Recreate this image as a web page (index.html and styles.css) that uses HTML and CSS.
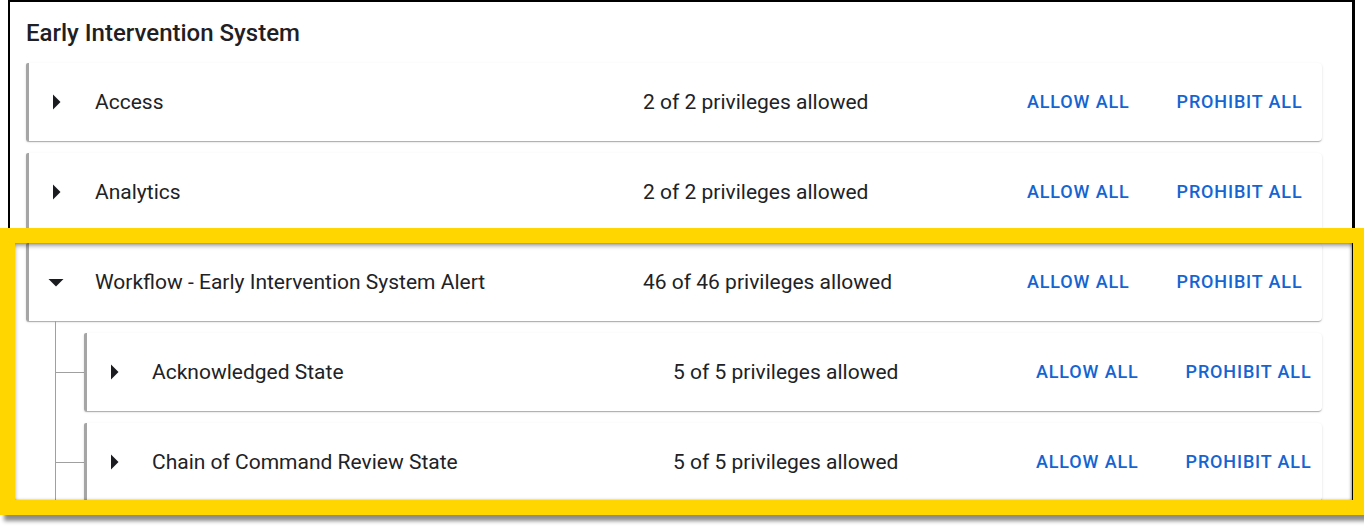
FILE: index.html
```html
<!DOCTYPE html>
<html lang="en">
<head>
<meta charset="utf-8">
<title>Early Intervention System</title>
<link rel="stylesheet" href="styles.css">
</head>
<body>
<div class="frame">
  <h2 class="title">Early Intervention System</h2>
  <div class="list">
    <div class="card top">
      <span class="caret"><svg viewBox="0 0 24 24" width="36" height="36"><path d="M10 17l5-5-5-5v10z"/></svg></span>
      <span class="label">Access</span>
      <span class="count">2 of 2 privileges allowed</span>
      <div class="actions"><button class="btn">Allow all</button><button class="btn">Prohibit all</button></div>
    </div>
    <div class="card top">
      <span class="caret"><svg viewBox="0 0 24 24" width="36" height="36"><path d="M10 17l5-5-5-5v10z"/></svg></span>
      <span class="label">Analytics</span>
      <span class="count">2 of 2 privileges allowed</span>
      <div class="actions"><button class="btn">Allow all</button><button class="btn">Prohibit all</button></div>
    </div>
    <div class="group">
      <div class="card top">
        <span class="caret"><svg viewBox="0 0 24 24" width="36" height="36"><path d="M7 10l5 5 5-5z"/></svg></span>
        <span class="label">Workflow - Early Intervention System Alert</span>
        <span class="count">46 of 46 privileges allowed</span>
        <div class="actions"><button class="btn">Allow all</button><button class="btn">Prohibit all</button></div>
      </div>
      <div class="sublist">
        <div class="subitem">
          <span class="connector"></span>
          <div class="card sub">
            <span class="caret"><svg viewBox="0 0 24 24" width="36" height="36"><path d="M10 17l5-5-5-5v10z"/></svg></span>
            <span class="label">Acknowledged State</span>
            <span class="count">5 of 5 privileges allowed</span>
            <div class="actions"><button class="btn">Allow all</button><button class="btn">Prohibit all</button></div>
          </div>
        </div>
        <div class="subitem">
          <span class="connector"></span>
          <div class="card sub">
            <span class="caret"><svg viewBox="0 0 24 24" width="36" height="36"><path d="M10 17l5-5-5-5v10z"/></svg></span>
            <span class="label">Chain of Command Review State</span>
            <span class="count">5 of 5 privileges allowed</span>
            <div class="actions"><button class="btn">Allow all</button><button class="btn">Prohibit all</button></div>
          </div>
        </div>
      </div>
    </div>
  </div>
</div>
<div class="highlight"></div>
</body>
</html>
```
FILE: styles.css
```css
html, body {
  margin: 0;
  padding: 0;
  height: 100%;
  overflow: hidden;
  background: #fff;
}
body {
  position: relative;
  font-family: Roboto, "Liberation Sans", sans-serif;
  color: #212226;
}
.frame {
  margin-left: 8px;
  width: 1347px;
  height: 506px;
  border: 2px solid #000;
  border-right-width: 3px;
  padding: 17px 30px 0 16px;
  box-sizing: border-box;
}
.title {
  margin: 0 0 16px 0;
  font-size: 24px;
  line-height: 28px;
  font-weight: 500;
  color: #1f2024;
}
.list {
  display: flex;
  flex-direction: column;
  gap: 12px;
}
.card {
  display: grid;
  align-items: center;
  height: 78px;
  box-sizing: border-box;
  background: #fff;
  border-left: 3px solid #a5a5a5;
  border-radius: 2px 4px 4px 2px;
  box-shadow: 0 2px 1px -1px rgba(0,0,0,.18), 0 1px 1px 0 rgba(0,0,0,.12), 0 1px 3px 0 rgba(0,0,0,.10);
}
.card.top {
  grid-template-columns: 66px 548px 376px auto;
}
.card.sub {
  flex: 1;
  grid-template-columns: 65px 521px 355px auto;
}
.caret {
  display: flex;
  margin-left: 9px;
  width: 36px;
  height: 36px;
}
.caret svg {
  fill: #1b1c1f;
}
.label, .count {
  font-size: 21px;
  line-height: 24px;
  white-space: nowrap;
}
.actions {
  display: flex;
  gap: 31px;
  white-space: nowrap;
}
.btn {
  font-family: Roboto, "Liberation Sans", sans-serif;
  font-size: 18px;
  font-weight: 500;
  letter-spacing: 0.85px;
  text-transform: uppercase;
  color: #1464d2;
  background: none;
  border: 0;
  padding: 6px 8px;
  line-height: 24px;
  cursor: pointer;
}
.group {
  display: flex;
  flex-direction: column;
}
.sublist {
  margin-left: 29px;
  border-left: 1px solid #a0a0a0;
  padding-top: 12px;
  display: flex;
  flex-direction: column;
  gap: 12px;
}
.subitem {
  display: flex;
  align-items: center;
}
.connector {
  flex: 0 0 28px;
  height: 1px;
  background: #a0a0a0;
}
.highlight {
  position: absolute;
  left: 0;
  top: 228px;
  width: 1368px;
  height: 287px;
  box-sizing: border-box;
  border: 15px solid #ffd600;
  box-shadow: 4px 6px 4px rgba(0,0,0,.45), inset 0 3px 4px rgba(0,0,0,.35), inset -2px 0 3px rgba(0,0,0,.3);
  pointer-events: none;
}
```
